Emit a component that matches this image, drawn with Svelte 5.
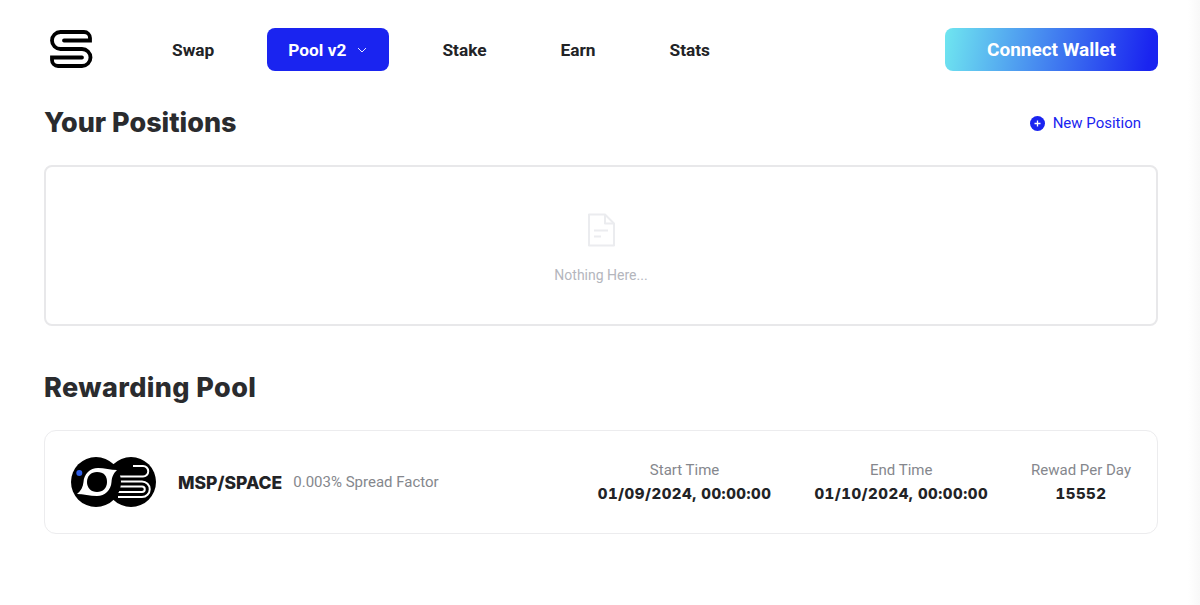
<script>
  const navItems = [
    { label: "Swap" },
    { label: "Pool v2", active: true },
    { label: "Stake" },
    { label: "Earn" },
    { label: "Stats" },
  ];
  const stats = [
    { label: "Start Time", value: "01/09/2024, 00:00:00" },
    { label: "End Time", value: "01/10/2024, 00:00:00" },
    { label: "Rewad Per Day", value: "15552" },
  ];
</script>

<div class="page">
  <header class="top">
    <svg class="logo" width="44" height="40" viewBox="0 0 44 40" fill="none" stroke="#000" stroke-width="3.800" stroke-linecap="round">
      <path d="M14 10.500H40V8A6 6 0 0 0 34 2H10.500A8.500 8.500 0 0 0 10.500 19H32A8.500 8.500 0 0 1 32 36H8A6 6 0 0 1 2 30V27.500H32" />
    </svg>
    <nav class="nav">
      {#each navItems as item}
        <div class="nav-item" class:active={item.active}>
          {item.label}
          {#if item.active}
            <svg class="caret" width="10" height="6" viewBox="0 0 10 6" fill="none" stroke="#fff" stroke-width="0.9">
              <path d="M1 1l4 4 4-4" />
            </svg>
          {/if}
        </div>
      {/each}
    </nav>
    <button class="connect">Connect Wallet</button>
  </header>

  <div class="section-head">
    <h2>Your Positions</h2>
    <div class="new-position">
      <svg width="15" height="15" viewBox="0 0 15 15">
        <circle cx="7.500" cy="7.500" r="7.500" fill="#1a24f0" />
        <path d="M7.500 4.500v6M4.500 7.500h6" stroke="#fff" stroke-width="1.300" />
      </svg>
      New Position
    </div>
  </div>

  <div class="empty">
    <svg width="28" height="34" viewBox="0 0 28 34" fill="none" stroke="#ebecef" stroke-width="2">
      <path d="M2 1.500H18L27 10.500V32.500H2Z" stroke-linejoin="round" />
      <path d="M18 1.500V10.500H27" stroke-linejoin="round" />
      <path d="M7 17.500H21M7 23.500H14" />
    </svg>
    <span>Nothing Here...</span>
  </div>

  <h2 class="rewarding">Rewarding Pool</h2>

  <div class="pool">
    <div class="tokens">
      <svg class="token first" width="50" height="50" viewBox="0 0 50 50">
        <circle cx="25" cy="25" r="25" fill="#000" />
        <path d="M6 37C10 34 12 30 12.500 25 13 17 19 11 27 11 33 11 40 13 46 13 42 17 41 20 40.500 25 40 33 34 39 26 39 19 39 12 37 6 37Z" fill="#fff" />
        <path d="M16 25C16 19 20 15 26 15 33 15 36 19 36 25 36 31 32 35 26 35 20 35 16 31 16 25Z" fill="#000" />
        <circle cx="8.300" cy="16" r="3" fill="#2f5fe8" />
      </svg>
      <svg class="token second" width="50" height="50" viewBox="0 0 50 50" fill="none">
        <circle cx="25" cy="25" r="25" fill="#000" />
        <path d="M12 19.500H37A5.250 5.250 0 0 0 37 9H27M12 24.500H36A7.750 7.750 0 0 1 36 40H12M12 29.500H36A2.750 2.750 0 0 1 36 35H12" stroke="#fff" stroke-width="2" />
      </svg>
    </div>
    <div class="pair">MSP/SPACE</div>
    <div class="spread">0.003% Spread Factor</div>
    <div class="stats">
      {#each stats as stat}
        <div class="stat">
          <div class="stat-label">{stat.label}</div>
          <div class="stat-value">{stat.value}</div>
        </div>
      {/each}
    </div>
  </div>
</div>

<style>
  :global(body) {
    margin: 0;
    background: #fff;
  }

  .page {
    height: 605px;
    box-sizing: border-box;
    padding: 28px 42px 0 44px;
    font-family: Roboto, "Liberation Sans", sans-serif;
    color: #222326;
    background: linear-gradient(90deg, #fff 1188px, #f8f8f8 1200px);
    overflow: hidden;
  }

  .top {
    display: flex;
    align-items: center;
    height: 43px;
  }

  .logo {
    margin-left: 6px;
    flex: none;
  }

  .nav {
    display: flex;
    gap: 32px;
    margin-left: 57px;
    flex: 1;
  }

  .nav-item {
    display: flex;
    align-items: center;
    height: 43px;
    padding: 0 21px;
    font-size: 17.300px;
    font-weight: 700;
    border-radius: 8px;
  }

  .nav-item.active {
    background: #1a24f0;
    color: #fff;
    padding-right: 22px;
  }

  .caret {
    margin-left: 11px;
  }

  .connect {
    width: 213px;
    height: 43px;
    border: none;
    border-radius: 8px;
    padding: 0;
    background: linear-gradient(100deg, #6fe6f0 0%, #1a24f0 95%);
    color: #fff;
    font-family: inherit;
    font-size: 19px;
    font-weight: 700;
  }

  .section-head {
    display: flex;
    align-items: center;
    justify-content: space-between;
    height: 34px;
    margin-top: 35px;
  }

  h2 {
    margin: 0;
    font-family: Inter, "Liberation Sans", sans-serif;
    font-size: 27px;
    font-weight: 800;
    line-height: 34px;
    color: #2a2b2e;
  }

  .new-position {
    display: flex;
    align-items: center;
    gap: 8px;
    padding-right: 17px;
    font-size: 15px;
    color: #1a24f0;
  }

  .empty {
    display: flex;
    flex-direction: column;
    align-items: center;
    height: 161px;
    margin-top: 25px;
    box-sizing: border-box;
    padding-top: 46px;
    border: 2px solid #e8e8ea;
    border-radius: 8px;
  }

  .empty span {
    margin-top: 20px;
    font-size: 14px;
    color: #b4b6bd;
  }

  .rewarding {
    margin-top: 45px;
    letter-spacing: 0.400px;
  }

  .pool {
    display: flex;
    align-items: center;
    height: 104px;
    margin-top: 25px;
    box-sizing: border-box;
    padding: 0 26px;
    border: 1px solid #ececee;
    border-radius: 12px;
  }

  .tokens {
    display: flex;
    flex: none;
  }

  .token.first {
    position: relative;
    z-index: 1;
  }

  .token.second {
    margin-left: -15px;
  }

  .pair {
    margin-left: 22px;
    font-family: Inter, "Liberation Sans", sans-serif;
    font-size: 17.500px;
    font-weight: 800;
    color: #222326;
  }

  .spread {
    margin-left: 11px;
    font-size: 15px;
    color: #85878d;
  }

  .stats {
    display: flex;
    gap: 43px;
    margin-left: auto;
  }

  .stat {
    text-align: center;
  }

  .stat-label {
    font-size: 15px;
    color: #85878d;
    line-height: 20px;
  }

  .stat-value {
    margin-top: 4px;
    font-family: Inter, "Liberation Sans", sans-serif;
    font-size: 15px;
    font-weight: 800;
    font-variant-numeric: tabular-nums;
    letter-spacing: 0.500px;
    line-height: 20px;
    color: #222326;
  }
</style>
